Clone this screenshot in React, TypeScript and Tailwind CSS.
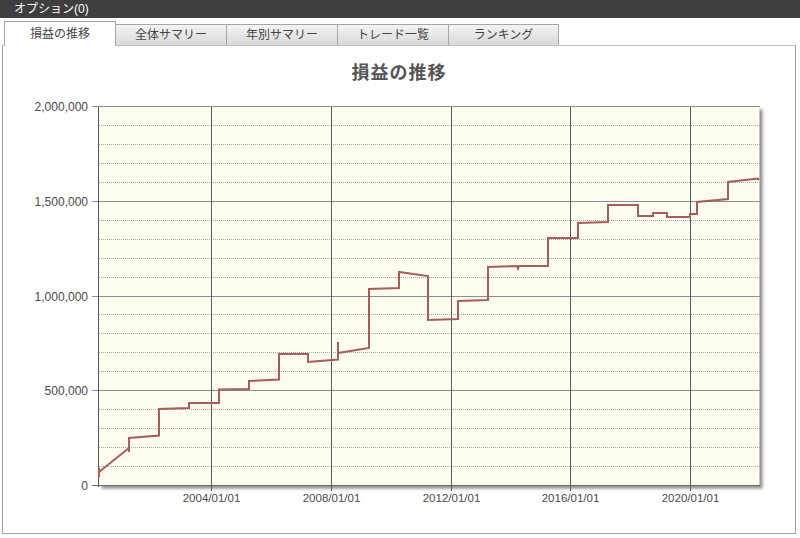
import React from 'react';

const TABS = ['損益の推移', '全体サマリー', '年別サマリー', 'トレード一覧', 'ランキング'];
const TAB_W = [112, 111, 111, 111, 110];

// plot area in page coordinates
const LEFT = 98.5;
const RIGHT = 759.5;
const TOP = 106.5;
const BOTTOM = 485.5;
const PX_PER_100K = (BOTTOM - TOP) / 20;

const yOf = (v: number) => BOTTOM - (v / 100000) * PX_PER_100K;
const snap = (n: number) => Math.round(n - 0.5) + 0.5;

const Y_LABELS = [0, 500000, 1000000, 1500000, 2000000];
const X_LINES = [
  { x: 211.5, label: '2004/01/01' },
  { x: 331.5, label: '2008/01/01' },
  { x: 451.5, label: '2012/01/01' },
  { x: 570.5, label: '2016/01/01' },
  { x: 690.5, label: '2020/01/01' },
];

// equity curve traced from the reference, page coordinates
const CURVE: [number, number][] = [
  [99, 477], [99, 468], [99, 472], [129, 448], [129, 452], [129, 438], [159, 435.5],
  [159, 409], [189, 408], [189, 403], [219, 403], [219, 389.5], [249, 389], [249, 381],
  [279, 379.5], [279, 354], [308, 354], [308, 362], [338, 359.5], [338, 342], [338, 353],
  [369, 348], [369, 289], [399, 288], [399, 272], [428, 276], [428, 320], [458, 319],
  [458, 301], [488, 300], [488, 267], [517, 266], [518, 268.5], [519, 266], [548, 266],
  [548, 238], [578, 238], [578, 223], [608, 222], [608, 205], [638, 205], [638, 216],
  [653, 216], [653, 213], [667, 213], [667, 217], [690, 217], [690, 214], [697, 214],
  [697, 202], [728, 199], [728, 182], [758, 178.5], [759, 180],
];

function Chart() {
  const minor: number[] = [];
  for (let v = 100000; v < 2000000; v += 100000) {
    if (v % 500000 !== 0) minor.push(v);
  }
  const d = CURVE.map(([x, y], i) => `${i === 0 ? 'M' : 'L'}${x},${y}`).join(' ');

  return (
    <svg width={792} height={433} viewBox="3 100 792 433" className="block">
      <defs>
        <filter id="plotShadow" x="-5%" y="-5%" width="110%" height="110%">
          <feGaussianBlur stdDeviation="1.6" />
        </filter>
      </defs>

      {/* plot background + drop shadow */}
      <rect x={LEFT + 3} y={TOP + 3} width={RIGHT - LEFT} height={BOTTOM - TOP} fill="#8c8c8c" filter="url(#plotShadow)" />
      <rect x={LEFT} y={TOP} width={RIGHT - LEFT} height={BOTTOM - TOP} fill="#fdfdef" />

      {/* minor grid */}
      {minor.map((v) => (
        <line key={v} x1={LEFT} x2={RIGHT} y1={snap(yOf(v))} y2={snap(yOf(v))} stroke="#a8a8a8" strokeDasharray="1 1" shapeRendering="crispEdges" />
      ))}

      {/* major grid + y labels */}
      {Y_LABELS.map((v) => {
        const y = snap(yOf(v));
        return (
          <g key={v}>
            <line x1={92} x2={RIGHT} y1={y} y2={y} stroke={v === 0 ? '#6a6a6a' : '#8e8e8e'} shapeRendering="crispEdges" />
            <text x={88} y={y + 4} textAnchor="end" fontSize={12} fill="#4a4a4a" fontFamily='"Liberation Sans", Arial, sans-serif'>
              {v.toLocaleString('en-US')}
            </text>
          </g>
        );
      })}

      {/* vertical grid + x labels */}
      {X_LINES.map((l) => (
        <g key={l.label}>
          <line x1={l.x} x2={l.x} y1={TOP} y2={BOTTOM + 5} stroke="#5a5a5a" shapeRendering="crispEdges" />
          <text x={l.x} y={502} textAnchor="middle" fontSize={11.5} fill="#4a4a4a" fontFamily='"Liberation Sans", Arial, sans-serif'>
            {l.label}
          </text>
        </g>
      ))}

      {/* y axis */}
      <line x1={LEFT} x2={LEFT} y1={TOP} y2={BOTTOM + 1} stroke="#555" shapeRendering="crispEdges" />

      {/* series */}
      <path d={d} fill="none" stroke="#a65e5a" strokeWidth={2} strokeLinejoin="miter" />
    </svg>
  );
}

export default function App() {
  return (
    <div
      className="w-[800px] h-[538px] bg-white overflow-hidden"
      style={{ fontFamily: '"Liberation Sans", "Noto Sans CJK JP", sans-serif' }}
    >
      {/* header */}
      <div className="h-[18px] bg-[#3e3e3e] text-white text-[12px] leading-[18px] pl-[14px]">
        オプション(0)
      </div>

      {/* tabs */}
      <div className="flex items-end h-[27px] pl-[4px]">
        {TABS.map((t, i) =>
          i === 0 ? (
            <div
              key={t}
              className="relative z-10 -mb-px h-[25px] bg-white border border-b-0 border-[#a6a6a6] flex items-center justify-center text-[12px] text-[#444]"
              style={{ width: TAB_W[i] }}
            >
              {t}
            </div>
          ) : (
            <div
              key={t}
              className="h-[21px] border-t border-r border-[#a6a6a6] bg-gradient-to-b from-[#f4f4f4] to-[#d9d9d9] flex items-center justify-center text-[12px] text-[#444]"
              style={{ width: TAB_W[i] }}
            >
              {t}
            </div>
          )
        )}
      </div>

      {/* panel */}
      <div className="ml-[2px] w-[794px] h-[489px] border border-[#a0a0a0] border-t-[#bdbdbd] flex flex-col">
        <div className="h-[54px] flex items-center justify-center text-[18px] font-bold text-[#555] tracking-[1px]">
          損益の推移
        </div>
        <Chart />
      </div>
    </div>
  );
}
